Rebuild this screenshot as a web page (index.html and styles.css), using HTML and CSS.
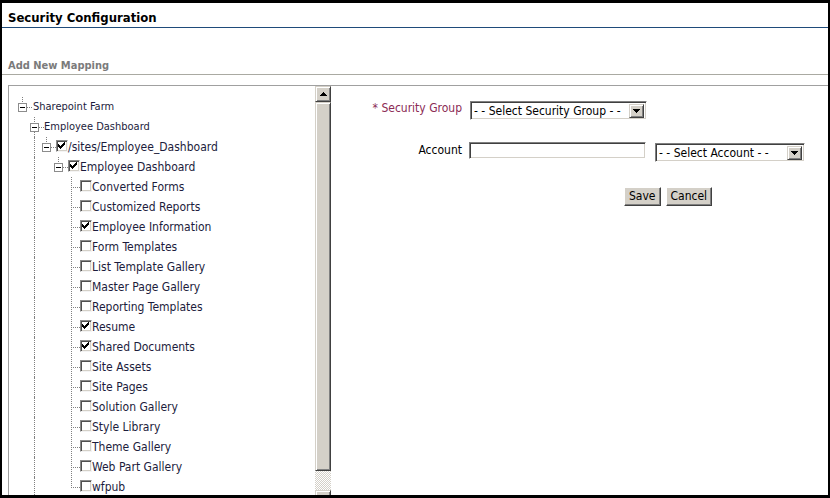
FILE: index.html
```html
<!DOCTYPE html>
<html lang="en">
<head>
    <meta charset="UTF-8">
    <title>Security Configuration</title>
    <link rel="stylesheet" href="styles.css">
</head>
<body>
    <svg class="defs" width="0" height="0">
        <symbol id="exp" viewBox="0 0 16 20">
            <path d="M6.5 0V6M11 10.5H16" stroke="#808080" stroke-dasharray="1 1" fill="none"/>
            <rect x="2.5" y="6.5" width="8" height="8" fill="#fff" stroke="#8c8c8c"/>
            <path d="M4 10.5H9" stroke="#000"/>
        </symbol>
        <symbol id="exp-down" viewBox="0 0 16 20">
            <path d="M6.5 0V6M6.5 15V20M11 10.5H16" stroke="#808080" stroke-dasharray="1 1" fill="none"/>
            <rect x="2.5" y="6.5" width="8" height="8" fill="#fff" stroke="#8c8c8c"/>
            <path d="M4 10.5H9" stroke="#000"/>
        </symbol>
        <symbol id="tee" viewBox="0 0 16 20">
            <path d="M7.5 0V20M9 10.5H16" stroke="#808080" stroke-dasharray="1 1" fill="none"/>
        </symbol>
        <symbol id="ell" viewBox="0 0 16 20">
            <path d="M7.5 0V11M9 10.5H16" stroke="#808080" stroke-dasharray="1 1" fill="none"/>
        </symbol>
        <symbol id="tick" viewBox="0 0 10 10">
            <path d="M1 3h1v1h1v1h1V4h1V3h1V2h1V1h1v3H7v1H6v1H5v1H4v1H3V7H2V6H1z" fill="#000"/>
        </symbol>
    </svg>

    <div class="frame">
        <div class="page-title">Security Configuration</div>
        <div class="section-title">Add New Mapping</div>

        <div class="mapping">
            <div class="tree-panel">
                <div class="tree">
                    <div class="node small">
                        <svg class="exp"><use href="#exp"/></svg>
                        <span class="label first">Sharepoint Farm</span>
                    </div>
                    <div class="node small">
                        <span class="sp"></span>
                        <svg class="exp"><use href="#exp-down"/></svg>
                        <span class="label">Employee Dashboard</span>
                    </div>
                    <div class="node">
                        <span class="sp"></span><span class="vl"></span>
                        <svg class="exp"><use href="#exp"/></svg>
                        <span class="cb"><svg><use href="#tick"/></svg></span>
                        <span class="label">/sites/Employee_Dashboard</span>
                    </div>
                    <div class="node">
                        <span class="sp"></span><span class="vl"></span><span class="sp"></span>
                        <svg class="exp"><use href="#exp"/></svg>
                        <span class="cb"><svg><use href="#tick"/></svg></span>
                        <span class="label">Employee Dashboard</span>
                    </div>

                    <div class="node leaf">
                        <span class="sp"></span><span class="vl"></span><span class="sp"></span><span class="sp"></span>
                        <svg class="exp"><use href="#tee"/></svg>
                        <span class="cb"></span><span class="label">Converted Forms</span>
                    </div>
                    <div class="node leaf">
                        <span class="sp"></span><span class="vl"></span><span class="sp"></span><span class="sp"></span>
                        <svg class="exp"><use href="#tee"/></svg>
                        <span class="cb"></span><span class="label">Customized Reports</span>
                    </div>
                    <div class="node leaf">
                        <span class="sp"></span><span class="vl"></span><span class="sp"></span><span class="sp"></span>
                        <svg class="exp"><use href="#tee"/></svg>
                        <span class="cb"><svg><use href="#tick"/></svg></span><span class="label">Employee Information</span>
                    </div>
                    <div class="node leaf">
                        <span class="sp"></span><span class="vl"></span><span class="sp"></span><span class="sp"></span>
                        <svg class="exp"><use href="#tee"/></svg>
                        <span class="cb"></span><span class="label">Form Templates</span>
                    </div>
                    <div class="node leaf">
                        <span class="sp"></span><span class="vl"></span><span class="sp"></span><span class="sp"></span>
                        <svg class="exp"><use href="#tee"/></svg>
                        <span class="cb"></span><span class="label">List Template Gallery</span>
                    </div>
                    <div class="node leaf">
                        <span class="sp"></span><span class="vl"></span><span class="sp"></span><span class="sp"></span>
                        <svg class="exp"><use href="#tee"/></svg>
                        <span class="cb"></span><span class="label">Master Page Gallery</span>
                    </div>
                    <div class="node leaf">
                        <span class="sp"></span><span class="vl"></span><span class="sp"></span><span class="sp"></span>
                        <svg class="exp"><use href="#tee"/></svg>
                        <span class="cb"></span><span class="label">Reporting Templates</span>
                    </div>
                    <div class="node leaf">
                        <span class="sp"></span><span class="vl"></span><span class="sp"></span><span class="sp"></span>
                        <svg class="exp"><use href="#tee"/></svg>
                        <span class="cb"><svg><use href="#tick"/></svg></span><span class="label">Resume</span>
                    </div>
                    <div class="node leaf">
                        <span class="sp"></span><span class="vl"></span><span class="sp"></span><span class="sp"></span>
                        <svg class="exp"><use href="#tee"/></svg>
                        <span class="cb"><svg><use href="#tick"/></svg></span><span class="label">Shared Documents</span>
                    </div>
                    <div class="node leaf">
                        <span class="sp"></span><span class="vl"></span><span class="sp"></span><span class="sp"></span>
                        <svg class="exp"><use href="#tee"/></svg>
                        <span class="cb"></span><span class="label">Site Assets</span>
                    </div>
                    <div class="node leaf">
                        <span class="sp"></span><span class="vl"></span><span class="sp"></span><span class="sp"></span>
                        <svg class="exp"><use href="#tee"/></svg>
                        <span class="cb"></span><span class="label">Site Pages</span>
                    </div>
                    <div class="node leaf">
                        <span class="sp"></span><span class="vl"></span><span class="sp"></span><span class="sp"></span>
                        <svg class="exp"><use href="#tee"/></svg>
                        <span class="cb"></span><span class="label">Solution Gallery</span>
                    </div>
                    <div class="node leaf">
                        <span class="sp"></span><span class="vl"></span><span class="sp"></span><span class="sp"></span>
                        <svg class="exp"><use href="#tee"/></svg>
                        <span class="cb"></span><span class="label">Style Library</span>
                    </div>
                    <div class="node leaf">
                        <span class="sp"></span><span class="vl"></span><span class="sp"></span><span class="sp"></span>
                        <svg class="exp"><use href="#tee"/></svg>
                        <span class="cb"></span><span class="label">Theme Gallery</span>
                    </div>
                    <div class="node leaf">
                        <span class="sp"></span><span class="vl"></span><span class="sp"></span><span class="sp"></span>
                        <svg class="exp"><use href="#tee"/></svg>
                        <span class="cb"></span><span class="label">Web Part Gallery</span>
                    </div>
                    <div class="node leaf">
                        <span class="sp"></span><span class="vl"></span><span class="sp"></span><span class="sp"></span>
                        <svg class="exp"><use href="#ell"/></svg>
                        <span class="cb"></span><span class="label">wfpub</span>
                    </div>
                </div>

                <div class="scrollbar">
                    <div class="sb-btn">
                        <svg width="7" height="4" viewBox="0 0 7 4"><path d="M3 0h1v1h1v1h1v1h1v1H0V3h1V2h1V1h1z" fill="#000"/></svg>
                    </div>
                    <div class="sb-thumb"></div>
                    <div class="sb-track"></div>
                    <div class="sb-btn"></div>
                </div>
            </div>

            <div class="form">
                <div class="form-grid">
                    <label class="req">* Security Group</label>
                    <div class="select">
                        <span class="select-text">- - Select Security Group - -</span>
                        <span class="select-arrow">
                            <svg width="7" height="4" viewBox="0 0 7 4"><path d="M0 0h7v1H6v1H5v1H4v1H3V3H2V2H1V1H0z" fill="#000"/></svg>
                        </span>
                    </div>
                    <span></span>

                    <label>Account</label>
                    <div class="textbox"></div>
                    <div class="select account">
                        <span class="select-text">- - Select Account - -</span>
                        <span class="select-arrow">
                            <svg width="7" height="4" viewBox="0 0 7 4"><path d="M0 0h7v1H6v1H5v1H4v1H3V3H2V2H1V1H0z" fill="#000"/></svg>
                        </span>
                    </div>
                </div>
                <div class="buttons">
                    <button class="btn">Save</button>
                    <button class="btn">Cancel</button>
                </div>
            </div>
        </div>
    </div>
</body>
</html>
```

FILE: styles.css
```css
* {
    box-sizing: border-box;
}
body {
    margin: 0;
    font-family: "DejaVu Sans Condensed", "DejaVu Sans", sans-serif;
    font-size: 12px;
    color: #000;
    background: #fff;
}
.defs {
    position: absolute;
    width: 0;
    height: 0;
}
.frame {
    width: 830px;
    height: 498px;
    border-style: solid;
    border-color: #000;
    border-width: 3px 2px 3px 2px;
    overflow: hidden;
}
.page-title {
    height: 25px;
    padding: 5px 0 0 6px;
    line-height: 19px;
    font-size: 13px;
    font-weight: bold;
    border-bottom: 1px solid #1f4b7a;
}
.section-title {
    margin-top: 28px;
    height: 19px;
    padding: 1px 0 0 6px;
    line-height: 17px;
    font-size: 11px;
    font-weight: bold;
    color: #7b7b7b;
    border-bottom: 1px solid #aaaaa2;
}
.mapping {
    display: flex;
    margin: 10px 0 0 6px;
    height: 430px;
    border-top: 1px solid #a0a0a0;
}

/* tree */
.tree-panel {
    display: flex;
    width: 323px;
    flex: none;
    border-left: 1px solid #a0a0a0;
}
.tree {
    flex: 1;
    padding: 11px 0 0 7px;
    color: #1c1c3c;
}
.node {
    display: flex;
    align-items: center;
    height: 20px;
    white-space: nowrap;
}
.node.small {
    font-size: 11px;
}
.sp {
    width: 12px;
    flex: none;
}
.vl {
    width: 12px;
    height: 20px;
    flex: none;
}
.vl::before {
    content: "";
    display: block;
    height: 20px;
    margin-left: 6px;
    border-left: 1px dotted #808080;
}
svg.exp {
    width: 16px;
    height: 20px;
    flex: none;
}
.label {
    line-height: 20px;
}
.label.first {
    margin-left: 1px;
}
.cb {
    width: 12px;
    height: 12px;
    flex: none;
    margin-bottom: 3px;
    background: #fff;
    border: 1px solid;
    border-color: #8a8a8a #f4f4f4 #f4f4f4 #8a8a8a;
    box-shadow: inset 1px 1px #505050, inset -1px -1px #d4d0c8;
}
.cb svg {
    display: block;
    width: 10px;
    height: 10px;
}

/* scrollbar */
.scrollbar {
    width: 16px;
    flex: none;
    display: flex;
    flex-direction: column;
}
.sb-btn,
.sb-thumb {
    flex: none;
    background: #d4d0c8;
    border: 1px solid;
    border-color: #d4d0c8 #404040 #404040 #d4d0c8;
    box-shadow: inset 1px 1px #fff, inset -1px -1px #808080;
}
.sb-btn {
    height: 16px;
    display: flex;
    align-items: center;
    justify-content: center;
}
.sb-thumb {
    height: 369px;
}
.sb-track {
    height: 19px;
    flex: none;
    background: repeating-conic-gradient(#d4d0c8 0 25%, #fff 0 50%) 0 0 / 2px 2px;
}

/* form */
.form {
    flex: 1;
    padding: 15px 0 0 40px;
}
.form-grid {
    display: grid;
    grid-template-columns: 92px 177px 159px;
    column-gap: 7px;
    row-gap: 22px;
    align-items: start;
}
.form-grid label {
    text-align: right;
    padding-right: 1px;
    line-height: 16px;
}
.form-grid label.req {
    color: #8b2b55;
    margin-top: -1px;
}
.select,
.textbox {
    background: #fff;
    border: 1px solid;
    border-color: #808080 #fff #fff #808080;
    box-shadow: inset 1px 1px #404040, inset -1px -1px #d4d0c8;
}
.select {
    display: flex;
    align-items: center;
    height: 19px;
    padding: 2px;
}
.select.account {
    width: 150px;
    margin: 1px 0 0 1px;
}
.select-text {
    flex: 1;
    padding: 1px 0 0 1px;
    line-height: 14px;
    white-space: nowrap;
    overflow: hidden;
}
.select-arrow {
    width: 15px;
    height: 14px;
    flex: none;
    display: flex;
    align-items: center;
    justify-content: center;
    background: #d4d0c8;
    border: 1px solid;
    border-color: #d4d0c8 #404040 #404040 #d4d0c8;
    box-shadow: inset 1px 1px #fff, inset -1px -1px #808080;
}
.textbox {
    width: 177px;
    height: 17px;
    margin-left: -1px;
}
.buttons {
    display: flex;
    gap: 5px;
    margin: 25px 0 0 253px;
}
.btn {
    height: 19px;
    margin: 0;
    padding: 0 4px;
    font-family: inherit;
    font-size: 12px;
    line-height: 15px;
    color: #000;
    background: #d4d0c8;
    border: 1px solid;
    border-color: #fff #404040 #404040 #fff;
    box-shadow: inset -1px -1px #808080;
}
```
